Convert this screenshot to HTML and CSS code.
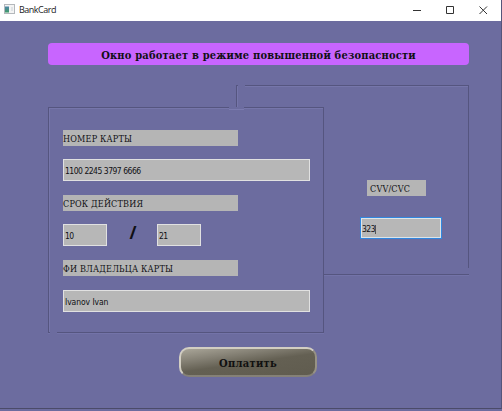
FILE: index.html
```html
<!DOCTYPE html>
<html lang="ru">
<head>
<meta charset="utf-8">
<title>BankCard</title>
<link rel="stylesheet" href="styles.css">
</head>
<body>
<div class="window">
  <header class="titlebar">
    <svg class="app-icon" width="12" height="11" viewBox="0 0 12 11">
      <defs><linearGradient id="app" x1="0" y1="0" x2="0" y2="1"><stop offset="0" stop-color="#4f86a8"/><stop offset="1" stop-color="#3f9a68"/></linearGradient></defs>
      <rect x=".5" y=".5" width="10" height="9" fill="#f4f4f4" stroke="#b4b8bc"/>
      <rect x="1" y="2.500" width="4" height="6" fill="url(#app)"/>
      <rect x="7" y="3" width="2" height="4" fill="#dfe3e6"/>
    </svg>
    <span class="app-name">BankCard</span>
    <svg class="controls" width="76" height="10" viewBox="0 0 76 10" fill="none" stroke="#333">
      <path d="M0 5.500H8M33.500 1.500h7v7h-7zM66.500 1.500l7.500 7.500M74 1.500l-7.500 7.500"/>
    </svg>
  </header>
  <main class="content">
    <div class="banner">Окно работает в режиме повышенной безопасности</div>
    <div class="cards">
      <section class="card back">
        <label class="label cvv-label">CVV/CVC</label>
        <div class="field cvv-field">323<i class="caret"></i></div>
      </section>
      <section class="card front">
        <label class="label">НОМЕР КАРТЫ</label>
        <div class="field">1100 2245 3797 6666</div>
        <label class="label">СРОК ДЕЙСТВИЯ</label>
        <div class="dates">
          <div class="field">10</div>
          <span class="slash">/</span>
          <div class="field">21</div>
        </div>
        <label class="label">ФИ ВЛАДЕЛЬЦА КАРТЫ</label>
        <div class="field holder">Ivanov Ivan</div>
      </section>
    </div>
    <button class="pay">Оплатить</button>
  </main>
</div>
</body>
</html>
```

FILE: styles.css
```css
* { box-sizing: border-box; }
body { margin: 0; background: #6c6c9f; }
.window {
  width: 502px;
  height: 409px;
  border-right: 1px solid #55557a;
  border-bottom: 1px solid #4b4b69;
  color: #101014;
  font-family: "DejaVu Serif", serif;
}
.titlebar {
  display: flex;
  align-items: center;
  height: 21px;
  padding: 0 12px 2px 4px;
  background: #fff;
}
.app-name {
  margin-left: 3px;
  font: 9px/12px "Open Sans", sans-serif;
  letter-spacing: -0.5px;
  color: #222;
}
.controls { margin-left: auto; }
.content {
  display: flex;
  flex-direction: column;
  height: 387px;
  padding: 22px 32px 0 48px;
}
.banner {
  height: 22px;
  border-radius: 4px;
  background: #c865ff;
  font: bold 11px/25px "DejaVu Serif Condensed", "DejaVu Serif", serif;
  letter-spacing: 0.2px;
  text-align: center;
  white-space: nowrap;
}
.cards {
  display: grid;
  grid-template-columns: 188px 88px 145px;
  grid-template-rows: 22px 168px 58px;
  margin-top: 20px;
}
.card {
  position: relative;
  display: flex;
  flex-direction: column;
  border: 1px solid #55557f;
  box-shadow: inset 1px 1px #7676aa, 0 1px #7373a8;
  background: #6c6c9f;
}
.card::before, .card::after {
  content: "";
  position: absolute;
  background: #6c6c9f;
}
.back {
  grid-area: 1 / 2 / 3 / 4;
  align-items: flex-start;
  padding: 94px 0 0 130px;
}
.back::before { left: 1px; top: -1px; width: 7px; height: 2px; }
.back::after { right: -1px; bottom: 0; width: 2px; height: 6px; }
.front {
  grid-area: 2 / 1 / 4 / 3;
  padding: 22px 13px 0 14px;
}
.front::before {
  left: 180px;
  top: -1px;
  width: 15px;
  height: 2px;
  border-bottom: 1px solid #7b7baf;
}
.front::after {
  left: 1px;
  bottom: -2px;
  width: 7px;
  height: 3px;
}
.label {
  flex: none;
  width: 175px;
  height: 16px;
  background: #b5b5b5;
  font: 9px/18px "DejaVu Serif Condensed", "DejaVu Serif", serif;
  letter-spacing: 0.18px;
  white-space: nowrap;
}
.field {
  flex: none;
  height: 22px;
  margin: 13px 0 14px;
  padding-left: 1px;
  border: 1px solid #e1e1e1;
  background: #b7b7b7;
  font: 8.5px/22px "DejaVu Sans Condensed", "DejaVu Sans", sans-serif;
  letter-spacing: -0.5px;
  white-space: nowrap;
}
.holder {
  margin-top: 14px;
  letter-spacing: -0.08px;
}
.dates { display: flex; }
.dates .field { width: 44px; }
.slash {
  width: 50px;
  padding: 11px 0 0 2px;
  font: bold 17px/22px "Open Sans", sans-serif;
  text-align: center;
}
.cvv-label { width: 59px; padding-left: 3px; }
.cvv-field {
  width: 82px;
  margin: 21px 0 0 -7px;
  border-color: #3187df;
  box-shadow: inset 0 0 0 1px #dde4e8;
}
.caret {
  display: inline-block;
  height: 9px;
  border-left: 1px solid #555;
  vertical-align: -2px;
}
.pay {
  width: 138px;
  height: 30px;
  margin: 14px 0 0 131px;
  padding: 3px 0 0;
  border: 2px solid;
  border-color: #d2cec2 #979285 #858177 #d2cec2;
  border-radius: 10px;
  background: linear-gradient(172deg, #aaa699 0%, #858175 28%, #646053 52%, #605c4f 100%);
  color: #101010;
  font: bold 11px/18px "DejaVu Serif Condensed", "DejaVu Serif", serif;
  letter-spacing: 0.3px;
}
```
